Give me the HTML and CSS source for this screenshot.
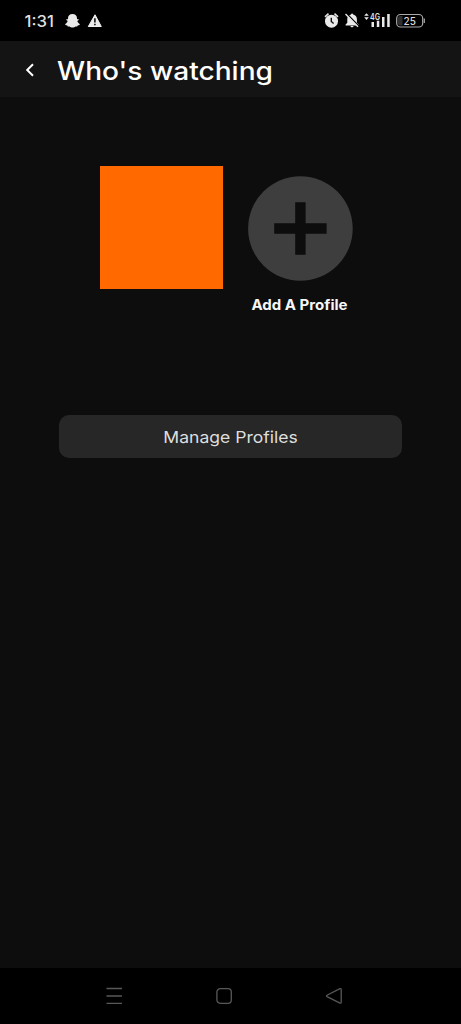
FILE: index.html
```html
<!DOCTYPE html>
<html lang="en">
<head>
<meta charset="utf-8">
<meta name="viewport" content="width=device-width, initial-scale=1">
<title>Who's watching</title>
<link rel="stylesheet" href="styles.css">
</head>
<body>
<div class="screen">
  <div class="status">
    <svg class="status-left" width="90" height="41" viewBox="0 0 90 41">
      <text class="clock" x="0.5" y="26.5" textLength="29.5" lengthAdjust="spacingAndGlyphs">1:31</text>
      <path class="fill" d="M48.500 14c2.900 0 4.500 1.900 4.500 4.200v1.100l1.400-.2.3.9-1.400 1.100c.5 1.500 1.300 2.400 2.500 2.900l-.2.9-1.900.5-.5 1h-1.700c-.9.6-1.800 1.200-3 1.200s-2.100-.6-3-1.200h-1.700l-.5-1-1.900-.5-.2-.9c1.200-.5 2-1.400 2.500-2.900l-1.400-1.100.3-.9 1.400.2v-1.100c0-2.300 1.600-4.200 4.500-4.200z"/>
      <path class="fill" d="M71 14.800 77.300 26.500H64.300Z" stroke="#f0f0f0" stroke-width="1" stroke-linejoin="round"/>
      <path d="M70.900 18.300v4.200M70.900 23.800v1.500" stroke="#000" stroke-width="1.500"/>
    </svg>
    <svg class="status-right" width="102" height="41" viewBox="324 0 102 41">
      <circle class="fill" cx="331.500" cy="21.200" r="6.500"/>
      <path d="M325 16.800 328.500 13.700M334.500 13.700 338 16.800" stroke="#e5e5e5" stroke-width="1.600" fill="none"/>
      <path d="M331.300 17.800v3.700l2.300 2" stroke="#111" stroke-width="1.400" fill="none"/>
      <path class="fill" d="M351 14.500c.2-1.300 2-1.300 2.200 0 2.500.6 3.700 2.400 3.700 4.700v3.600l1.700 1.700v1h-13v-1l1.700-1.700v-3.600c0-2.300 1.200-4.100 3.700-4.700zM350.400 26h3.200c-.3 1.800-2.900 1.800-3.200 0z"/>
      <path d="M346.500 13.500 359 26.300" stroke="#000" stroke-width="1.500"/>
      <path d="M345.500 14 358 26.800" stroke="#e5e5e5" stroke-width="1.400"/>
      <path class="fill" d="M364.200 15.800 366.500 13.200 368.800 15.800ZM364.200 17.300 366.500 19.900 368.800 17.300Z"/>
      <text class="network" x="370" y="19.700" textLength="10" lengthAdjust="spacingAndGlyphs">4G</text>
      <path class="fill" d="M371.500 22h2.500v5h-2.500zM376.800 20.700h2.500V27h-2.500zM382 17h2.500v10H382zM387.200 14h2.500v13h-2.500z"/>
      <rect x="396.700" y="14.500" width="26" height="12.500" rx="3.800" fill="#000" stroke="#aaa" stroke-width="1.200"/>
      <path d="M400 16h2.500v9.500H400a2 2 0 0 1-2-2v-5.500a2 2 0 0 1 2-2z" fill="#303030"/>
      <path d="M424.300 18.500v4.500" stroke="#aaa" stroke-width="1.200"/>
      <text class="battery" x="403.500" y="24.500" textLength="12.300" lengthAdjust="spacingAndGlyphs">25</text>
    </svg>
  </div>

  <header class="header">
    <svg class="back" width="12" height="18" viewBox="0 0 12 18"><path d="M9 4.200 3.200 10 9 15.800"/></svg>
    <svg class="title" width="220" height="56" viewBox="0 0 220 56" role="heading">
      <text x="0" y="38.700" textLength="216" lengthAdjust="spacingAndGlyphs">Who's watching</text>
    </svg>
  </header>

  <main class="content">
    <div class="profiles">
      <div class="avatar"></div>
      <div class="add">
        <svg width="105" height="105" viewBox="0 0 105 105">
          <circle cx="52.400" cy="52.500" r="52.300" fill="#3e3e3e"/>
          <path d="M47.200 26.300h10.400v21h21v10.500h-21v21H47.200v-21h-21V47.300h21z" fill="#0d0d0d"/>
        </svg>
        <svg class="add-label" width="105" height="24" viewBox="0 0 105 24">
          <text x="3.500" y="17.900" textLength="96" lengthAdjust="spacingAndGlyphs">Add A Profile</text>
        </svg>
      </div>
    </div>
    <div class="manage">
      <svg width="136" height="43" viewBox="0 0 136 43">
        <text x="0.300" y="28.300" textLength="134.500" lengthAdjust="spacingAndGlyphs">Manage Profiles</text>
      </svg>
    </div>
  </main>

  <nav class="nav">
    <svg width="18" height="18" viewBox="0 0 18 18"><path d="M1.500 1.500h15.500M1.500 9h15.500M1.500 16.300h15.500"/></svg>
    <svg width="18" height="18" viewBox="0 0 18 18"><rect x="1.900" y="1.700" width="14.400" height="14.600" rx="3.300"/></svg>
    <svg width="18" height="18" viewBox="0 0 18 18"><path d="M15 1.700 2 8.200q-1 .7 0 1.400L15 16.100q1.200.3 1.200-.9V2.600q0-1.200-1.200-.9z"/></svg>
  </nav>
</div>
</body>
</html>
```
FILE: styles.css
```css
* { box-sizing: border-box; }
body {
  margin: 0;
  background: #0d0d0d;
  font-family: Inter, "Open Sans", sans-serif;
}
svg { display: block; flex: none; }
.screen {
  display: flex;
  flex-direction: column;
  width: 461px;
  height: 1024px;
  overflow: hidden;
}
.status {
  display: flex;
  justify-content: space-between;
  height: 41px;
  padding: 0 35px 0 24px;
  background: #000;
}
.fill { fill: #eaeaea; }
.clock { font-size: 16px; font-weight: 500; fill: #dedede; }
.network { font-size: 8.5px; font-weight: 600; fill: #e0e0e0; }
.battery { font-size: 10px; font-weight: 500; fill: #dadada; }
.header {
  display: flex;
  align-items: center;
  height: 56px;
  padding-left: 24px;
  background: #141414;
}
.back path { fill: none; stroke: #fff; stroke-width: 2; }
.title { margin-left: 21px; }
.title text { font-size: 25px; font-weight: 500; fill: #fff; }
.content {
  flex: 1;
  display: flex;
  flex-direction: column;
  align-items: center;
  padding-top: 69px;
}
.profiles {
  display: flex;
  gap: 25px;
  width: 261px;
  height: 249px;
}
.avatar { width: 123px; height: 123px; background: #ff6900; }
.add { padding-top: 10px; }
.add-label { margin-top: 11px; }
.add-label text { font-size: 14px; font-weight: 700; fill: #f7f7f7; }
.manage {
  display: flex;
  justify-content: center;
  width: 343px;
  height: 43px;
  border-radius: 10px;
  background: #272727;
}
.manage text { font-size: 16.5px; font-weight: 400; fill: #dedede; }
.nav {
  display: flex;
  justify-content: center;
  align-items: center;
  gap: 92px;
  height: 56px;
  padding-right: 13px;
  background: #000;
}
.nav svg { fill: none; stroke: #585858; stroke-width: 1.3; }
```
